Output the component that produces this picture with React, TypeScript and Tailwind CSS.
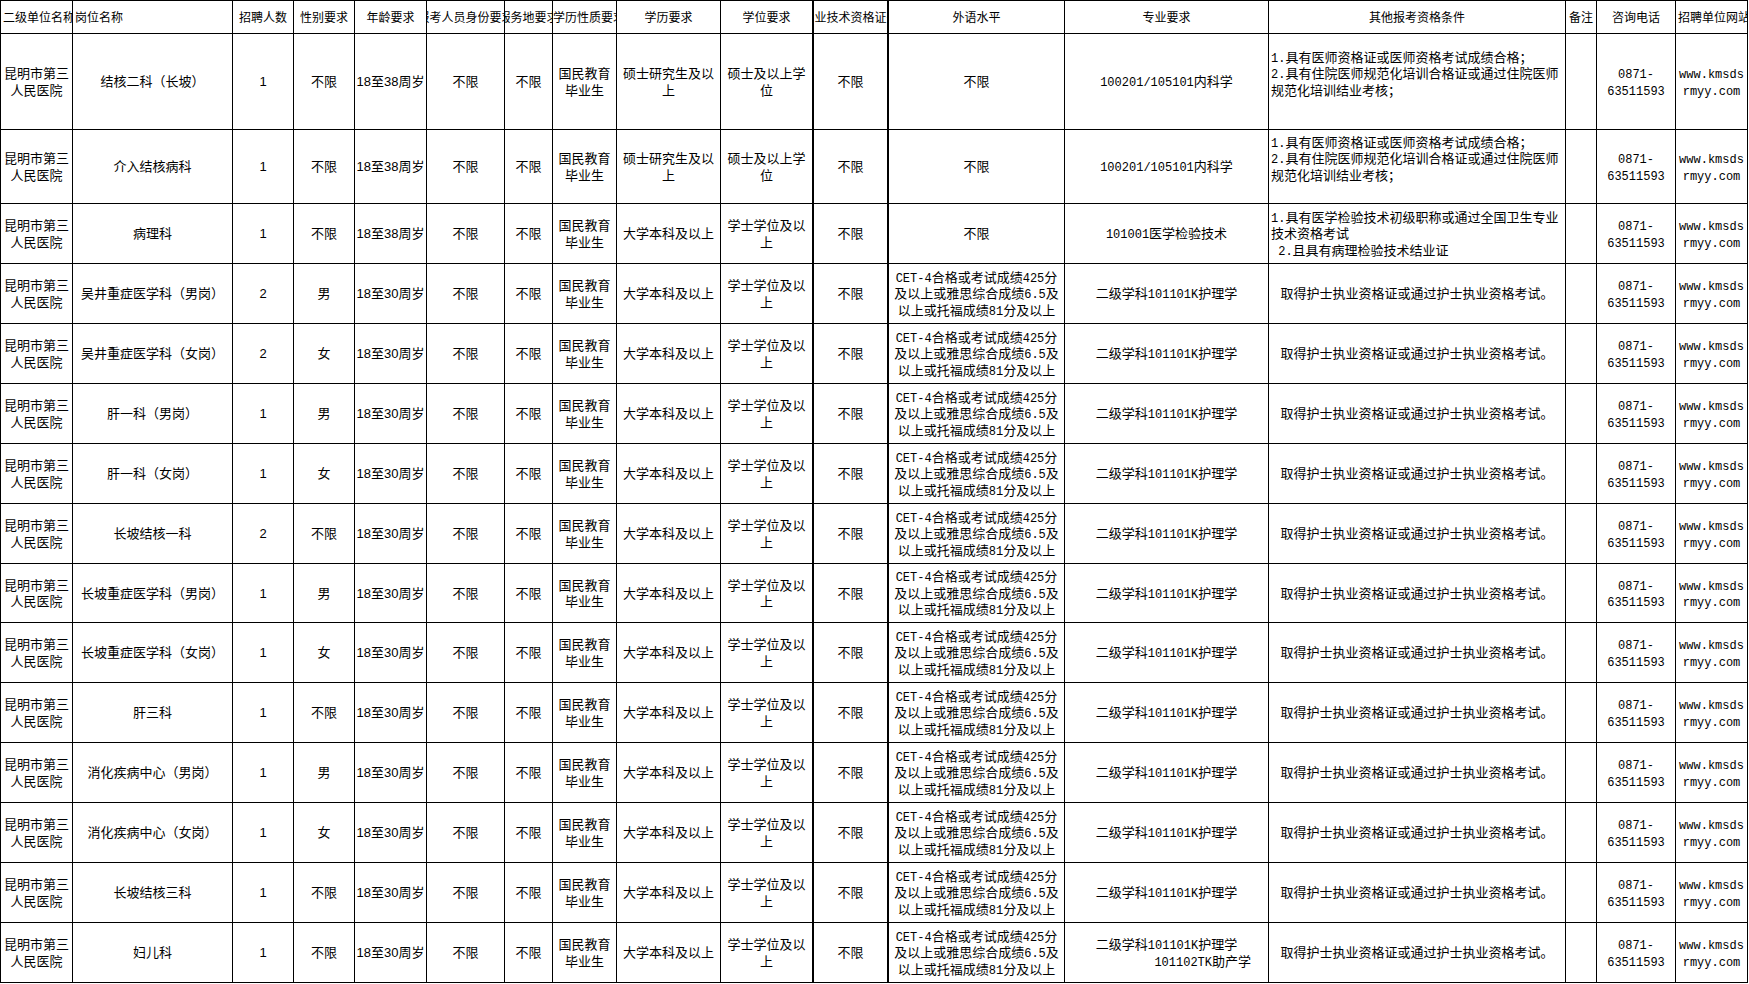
import React from 'react';

// one column template shared by every row so the grid lines stay aligned
const GRID =
  'grid grid-cols-[72px_160px_61px_61px_72px_78px_48px_64px_104px_93px_75px_176px_204px_297px_31px_79px_72px]';

const MONO = "font-['Liberation_Mono',monospace] text-[12px] leading-none";
const SANS = "font-['Liberation_Sans',sans-serif] leading-none";

type Latin = 'mono' | 'sans';

// SimSun-like mix: CJK at 13px, ascii runs in a narrower latin face
function Txt({ s, latin = 'mono' }: { s: string; latin?: Latin }) {
  const parts = s.split(/([\x20-\x7E]+)/).filter(Boolean);
  return (
    <>
      {parts.map((p, i) =>
        /^[\x20-\x7E]+$/.test(p) ? (
          <span key={i} className={latin === 'mono' ? MONO : SANS}>
            {p}
          </span>
        ) : (
          <span key={i}>{p}</span>
        )
      )}
    </>
  );
}

function Lines({ lines, latin }: { lines: string[]; latin?: Latin }) {
  return (
    <div className="leading-[16.5px]">
      {lines.map((l, i) => (
        <div key={i} className="h-[16.5px] whitespace-pre">
          {l ? <Txt s={l} latin={latin} /> : '\u00a0'}
        </div>
      ))}
    </div>
  );
}

function Cell({
  children,
  thick,
  left,
  className = '',
}: {
  children?: React.ReactNode;
  thick?: boolean;
  left?: boolean;
  className?: string;
}) {
  return (
    <div
      className={`flex items-center overflow-hidden border-b border-black ${thick ? 'border-r-2' : 'border-r'} ${
        left ? 'justify-start text-left pl-[2px]' : 'justify-center text-center'
      } ${className}`}
    >
      {children}
    </div>
  );
}

const headers: [string, 'l' | 'c' | 'l0'][] = [
  ['二级单位名称', 'l'],
  ['岗位名称', 'l'],
  ['招聘人数', 'c'],
  ['性别要求', 'c'],
  ['年龄要求', 'c'],
  ['报考人员身份要求', 'c'],
  ['服务地要求', 'c'],
  ['学历性质要求', 'l0'],
  ['学历要求', 'c'],
  ['学位要求', 'c'],
  ['专业技术资格证书', 'c'],
  ['外语水平', 'c'],
  ['专业要求', 'c'],
  ['其他报考资格条件', 'c'],
  ['备注', 'c'],
  ['咨询电话', 'c'],
  ['招聘单位网站', 'l'],
];

const DOCTOR = [
  '1.具有医师资格证或医师资格考试成绩合格；',
  '2.具有住院医师规范化培训合格证或通过住院医师',
  '规范化培训结业考核；',
  '',
];
const LAB = ['1.具有医学检验技术初级职称或通过全国卫生专业', '技术资格考试', ' 2.且具有病理检验技术结业证'];
const NURSE = ['取得护士执业资格证或通过护士执业资格考试。'];
const CET = ['CET-4合格或考试成绩425分', '及以上或雅思综合成绩6.5及', '以上或托福成绩81分及以上'];

type Row = {
  post: string;
  count: string;
  gender: string;
  age: string;
  edu: string[];
  degree: string[];
  lang: string[];
  major: string[] | 'mid';
  other: string[];
  otherLeft?: boolean;
  h: string;
};

const nurse = (post: string, count: string, gender: string, h = 'h-[60px]'): Row => ({
  post,
  count,
  gender,
  age: '18至30周岁',
  edu: ['大学本科及以上'],
  degree: ['学士学位及以', '上'],
  lang: CET,
  major: ['二级学科101101K护理学'],
  other: NURSE,
  h,
});

const rows: Row[] = [
  {
    post: '结核二科（长坡）',
    count: '1',
    gender: '不限',
    age: '18至38周岁',
    edu: ['硕士研究生及以', '上'],
    degree: ['硕士及以上学', '位'],
    lang: ['不限'],
    major: ['100201/105101内科学'],
    other: DOCTOR,
    otherLeft: true,
    h: 'h-[96px]',
  },
  {
    post: '介入结核病科',
    count: '1',
    gender: '不限',
    age: '18至38周岁',
    edu: ['硕士研究生及以', '上'],
    degree: ['硕士及以上学', '位'],
    lang: ['不限'],
    major: ['100201/105101内科学'],
    other: DOCTOR,
    otherLeft: true,
    h: 'h-[74px]',
  },
  {
    post: '病理科',
    count: '1',
    gender: '不限',
    age: '18至38周岁',
    edu: ['大学本科及以上'],
    degree: ['学士学位及以', '上'],
    lang: ['不限'],
    major: ['101001医学检验技术'],
    other: LAB,
    otherLeft: true,
    h: 'h-[60px]',
  },
  nurse('吴井重症医学科（男岗）', '2', '男'),
  nurse('吴井重症医学科（女岗）', '2', '女'),
  nurse('肝一科（男岗）', '1', '男'),
  nurse('肝一科（女岗）', '1', '女'),
  nurse('长坡结核一科', '2', '不限'),
  nurse('长坡重症医学科（男岗）', '1', '男', 'h-[59px]'),
  nurse('长坡重症医学科（女岗）', '1', '女'),
  nurse('肝三科', '1', '不限'),
  nurse('消化疾病中心（男岗）', '1', '男'),
  nurse('消化疾病中心（女岗）', '1', '女'),
  nurse('长坡结核三科', '1', '不限'),
  { ...nurse('妇儿科', '1', '不限'), major: 'mid' },
];

export default function App() {
  return (
    <div className="min-h-screen bg-white text-black">
      <div className="w-[1748px] border-l border-t border-black font-['Noto_Sans_CJK_SC',sans-serif] text-[13px]">
        {/* header */}
        <div className={`${GRID} h-[33px] text-[12px]`}>
          {headers.map(([t, a], i) => (
            <div
              key={t}
              className={`flex items-center overflow-hidden border-b border-black ${
                i === 9 || i === 10 ? 'border-r-2' : 'border-r'
              } ${a === 'c' ? 'justify-center' : a === 'l' ? 'justify-start pl-[2px]' : 'justify-start'}`}
            >
              <span className="shrink-0 whitespace-nowrap">{t}</span>
            </div>
          ))}
        </div>

        {rows.map((r, idx) => (
          <div key={idx} className={`${GRID} ${r.h}`}>
            <Cell>
              <Lines lines={['昆明市第三', '人民医院']} />
            </Cell>
            <Cell>
              <Lines lines={[r.post]} />
            </Cell>
            <Cell>
              <Lines lines={[r.count]} latin="sans" />
            </Cell>
            <Cell>
              <Lines lines={[r.gender]} />
            </Cell>
            <Cell>
              <Lines lines={[r.age]} latin="sans" />
            </Cell>
            <Cell>
              <Lines lines={['不限']} />
            </Cell>
            <Cell>
              <Lines lines={['不限']} />
            </Cell>
            <Cell>
              <Lines lines={['国民教育', '毕业生']} />
            </Cell>
            <Cell>
              <Lines lines={r.edu} />
            </Cell>
            <Cell thick>
              <Lines lines={r.degree} />
            </Cell>
            <Cell thick>
              <Lines lines={['不限']} />
            </Cell>
            <Cell>
              <Lines lines={r.lang} />
            </Cell>
            <Cell>
              {r.major === 'mid' ? (
                <div className="w-full leading-[16.5px]">
                  <div className="h-[16.5px] whitespace-pre text-center">
                    <Txt s="二级学科101101K护理学" />
                  </div>
                  <div className="h-[16.5px] whitespace-pre pr-[17px] text-right">
                    <Txt s="101102TK助产学" />
                  </div>
                </div>
              ) : (
                <Lines lines={r.major} />
              )}
            </Cell>
            <Cell left={r.otherLeft}>
              <Lines lines={r.other} />
            </Cell>
            <Cell />
            <Cell>
              <Lines lines={['0871-', '63511593']} />
            </Cell>
            <Cell>
              <Lines lines={['www.kmsds', 'rmyy.com']} />
            </Cell>
          </div>
        ))}
      </div>
    </div>
  );
}
